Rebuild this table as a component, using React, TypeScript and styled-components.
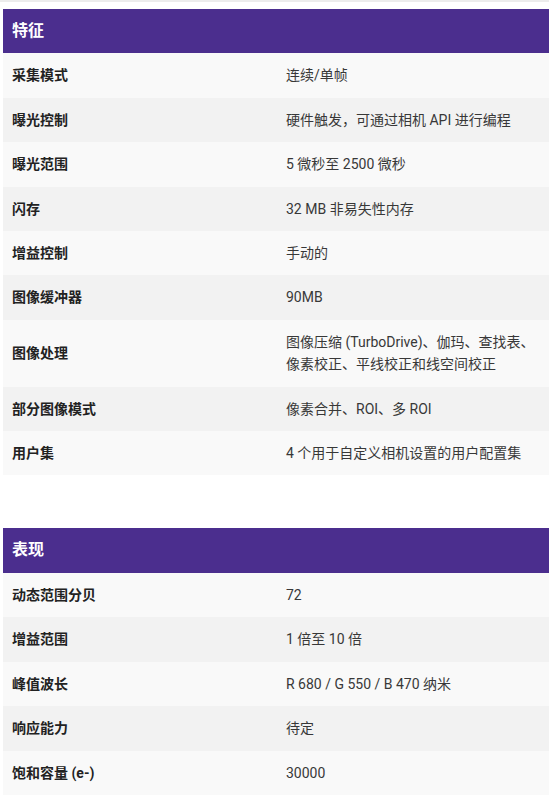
import React from "react";
import styled, { createGlobalStyle } from "styled-components";

const GlobalStyle = createGlobalStyle`
  html, body { margin: 0; padding: 0; background: #ffffff; }
  body { font-family: Roboto, "Noto Sans CJK SC", sans-serif; }
`;

const Page = styled.div`
  display: flex;
  flex-direction: column;
`;

const TopRule = styled.div`
  height: 2px;
  background: #ececec;
`;

const Content = styled.div`
  display: flex;
  flex-direction: column;
  gap: 53px;
  padding: 7px 0 0 3px;
`;

const Table = styled.section`
  display: flex;
  flex-direction: column;
  width: 546px;
`;

const Header = styled.h2`
  margin: 0;
  background: #4b2e8e;
  color: #ffffff;
  font-family: Roboto, "Noto Sans CJK SC", sans-serif;
  font-weight: 700;
  font-size: 16px;
  line-height: 22.4px;
  padding: 11px 9px 11px 9px;
`;

const Row = styled.div<{ $shade: boolean }>`
  display: grid;
  grid-template-columns: 1fr 1fr;
  background: ${(p) => (p.$shade ? "#f2f2f2" : "#f9f9f9")};
  align-items: center;
`;

const Label = styled.div`
  padding: 11px 9px;
  font-size: 14px;
  line-height: 22.4px;
  font-weight: 700;
  color: #222222;
`;

const Value = styled.div`
  padding: 11px 10px;
  font-size: 14px;
  line-height: 22.4px;
  color: #383838;
`;

type Item = [string, string];

const features: Item[] = [
  ["采集模式", "连续/单帧"],
  ["曝光控制", "硬件触发，可通过相机 API 进行编程"],
  ["曝光范围", "5 微秒至 2500 微秒"],
  ["闪存", "32 MB 非易失性内存"],
  ["增益控制", "手动的"],
  ["图像缓冲器", "90MB"],
  ["图像处理", "图像压缩 (TurboDrive)、伽玛、查找表、像素校正、平线校正和线空间校正"],
  ["部分图像模式", "像素合并、ROI、多 ROI"],
  ["用户集", "4 个用于自定义相机设置的用户配置集"],
];

const performance: Item[] = [
  ["动态范围分贝", "72"],
  ["增益范围", "1 倍至 10 倍"],
  ["峰值波长", "R 680 / G 550 / B 470 纳米"],
  ["响应能力", "待定"],
  ["饱和容量 (e-)", "30000"],
];

const SpecTable = ({ title, items }: { title: string; items: Item[] }) => (
  <Table>
    <Header>{title}</Header>
    {items.map(([k, v], i) => (
      <Row key={k} $shade={i % 2 === 1}>
        <Label>{k}</Label>
        <Value>{v}</Value>
      </Row>
    ))}
  </Table>
);

export default function App() {
  return (
    <>
      <GlobalStyle />
      <Page>
        <TopRule />
        <Content>
          <SpecTable title="特征" items={features} />
          <SpecTable title="表现" items={performance} />
        </Content>
      </Page>
    </>
  );
}
